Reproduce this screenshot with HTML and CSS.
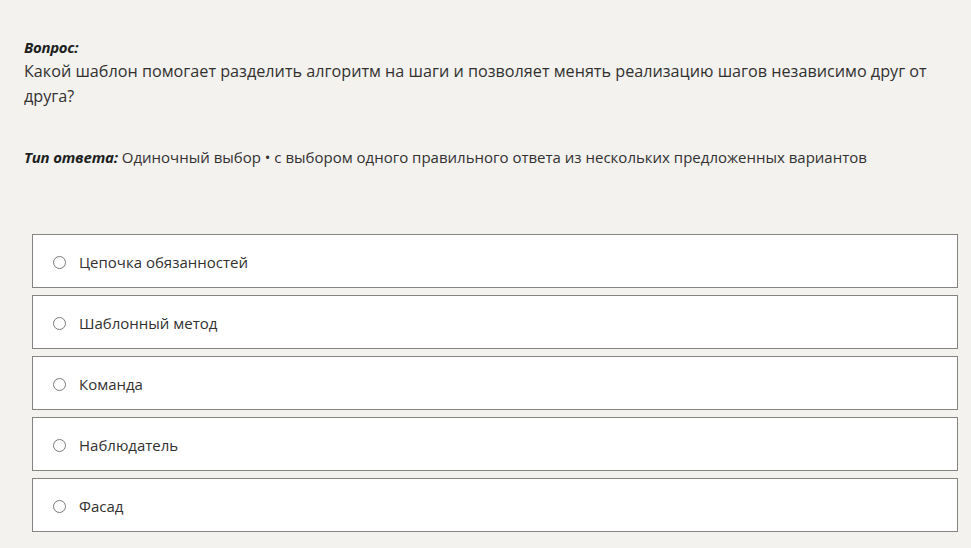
FILE: index.html
```html
<!DOCTYPE html>
<html lang="ru">
<head>
<meta charset="utf-8">
<link rel="stylesheet" href="styles.css">
</head>
<body>
<div class="page">
  <div class="q-label">Вопрос:</div>
  <div class="q-text">Какой шаблон помогает разделить алгоритм на шаги и позволяет менять реализацию шагов независимо друг от друга?</div>
  <div class="type"><span class="type-label">Тип ответа:</span> Одиночный выбор • с выбором одного правильного ответа из нескольких предложенных вариантов</div>
  <div class="options">
    <label class="option"><span class="radio"></span><span class="opt-text">Цепочка обязанностей</span></label>
    <label class="option"><span class="radio"></span><span class="opt-text">Шаблонный метод</span></label>
    <label class="option"><span class="radio"></span><span class="opt-text">Команда</span></label>
    <label class="option"><span class="radio"></span><span class="opt-text">Наблюдатель</span></label>
    <label class="option"><span class="radio"></span><span class="opt-text">Фасад</span></label>
  </div>
</div>
</body>
</html>
```
FILE: styles.css
```css
html, body {
  margin: 0;
  padding: 0;
  background: #f3f2ef;
}
body {
  font-family: "Open Sans", "Noto Sans", sans-serif;
  color: #323130;
}
.page {
  padding: 37px 13px 0 24px;
}
.q-label {
  font-size: 15px;
  font-weight: 700;
  font-style: italic;
  line-height: 20px;
  letter-spacing: -0.3px;
  color: #201f1e;
}
.q-text {
  font-size: 16.2px;
  line-height: 25px;
  margin-top: 2px;
  padding-right: 10px;
}
.type {
  font-size: 15px;
  line-height: 22px;
  margin-top: 37px;
}
.type-label {
  font-weight: 700;
  font-style: italic;
  letter-spacing: -0.2px;
  color: #201f1e;
}
.options {
  margin-top: 66px;
  margin-left: 8px;
  display: flex;
  flex-direction: column;
  gap: 7px;
}
.option {
  height: 50px;
  padding-top: 2px;
  border: 1px solid #858481;
  background: #ffffff;
  display: flex;
  align-items: center;
  padding-left: 20px;
  box-sizing: content-box;
}
.radio {
  width: 11px;
  height: 11px;
  border: 1px solid #7a7977;
  border-radius: 50%;
  flex: none;
}
.opt-text {
  margin-left: 13px;
  font-size: 15px;
  line-height: 20px;
}
```
